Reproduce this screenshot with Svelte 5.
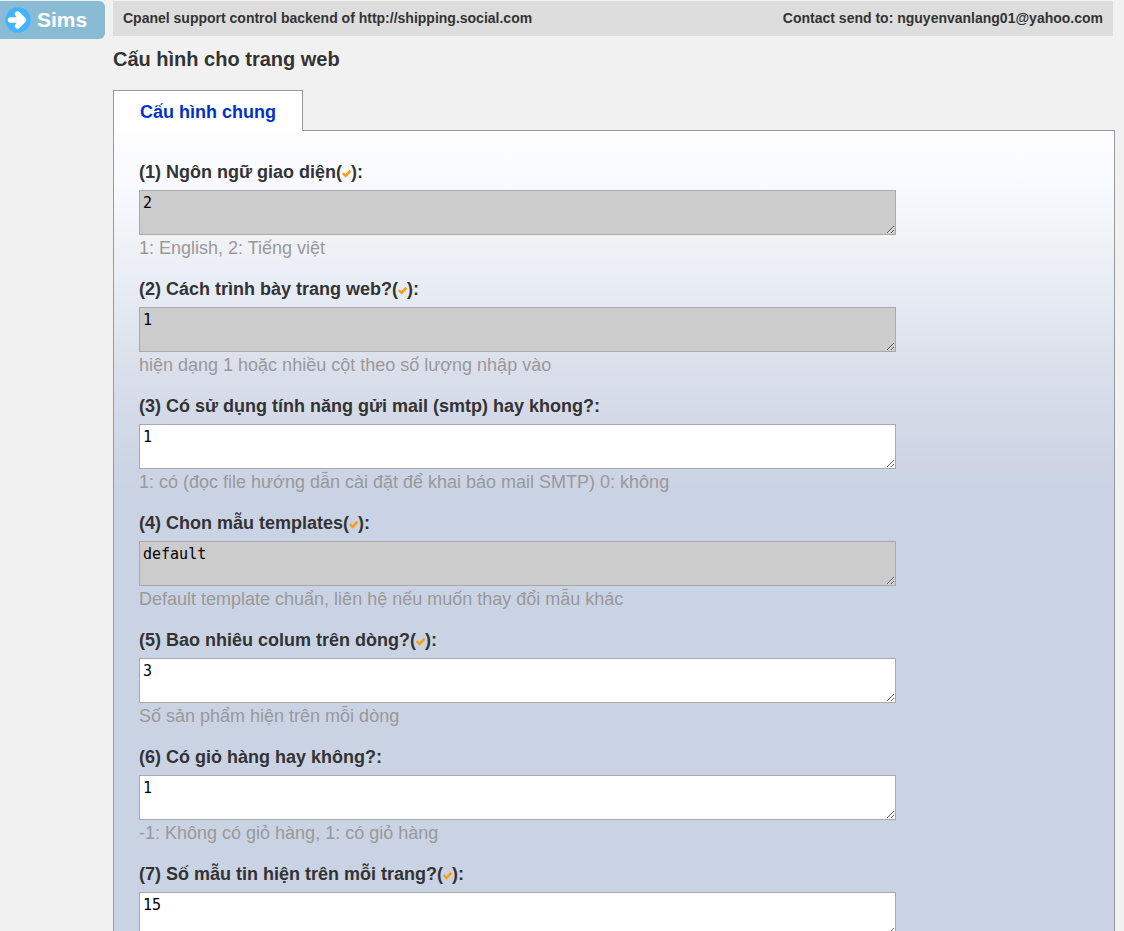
<script>
  const fields = [
    { label: 'Ngôn ngữ giao diện', marked: true, value: '2', locked: true, hint: '1: English, 2: Tiếng việt' },
    { label: 'Cách trình bày trang web?', marked: true, value: '1', locked: true, hint: 'hiện dạng 1 hoặc nhiều cột theo số lượng nhập vào' },
    { label: 'Có sử dụng tính năng gửi mail (smtp) hay khong?', marked: false, value: '1', locked: false, hint: '1: có (đọc file hướng dẫn cài đặt để khai báo mail SMTP) 0: không' },
    { label: 'Chon mẫu templates', marked: true, value: 'default', locked: true, hint: 'Default template chuẩn, liên hệ nếu muốn thay đổi mẫu khác' },
    { label: 'Bao nhiêu colum trên dòng?', marked: true, value: '3', locked: false, hint: 'Số sản phẩm hiện trên mỗi dòng' },
    { label: 'Có giỏ hàng hay không?', marked: false, value: '1', locked: false, hint: '-1: Không có giỏ hàng, 1: có giỏ hàng' },
    { label: 'Số mẫu tin hiện trên mỗi trang?', marked: true, value: '15', locked: false, hint: '' }
  ];
</script>

<div class="page">
  <aside>
    <a class="brand" href="#home">
      <svg width="26" height="26" viewBox="0 0 26 26" aria-hidden="true">
        <circle cx="13" cy="13" r="12.7" fill="#42b4fc" />
        <path d="M5.5 13H18M12.5 7L18.5 13L12.5 19" fill="none" stroke="#fff" stroke-width="5.4" stroke-linejoin="round" stroke-linecap="round" />
      </svg>
      <span>Sims</span>
    </a>
  </aside>

  <main>
    <header>
      <span>Cpanel support control backend of http://shipping.social.com</span>
      <span>Contact send to: nguyenvanlang01@yahoo.com</span>
    </header>

    <h1>Cấu hình cho trang web</h1>

    <nav><a class="tab" href="#general">Cấu hình chung</a></nav>

    <form class="panel">
      {#each fields as field, i}
        <div class="field">
          <label for="field-{i}">({i + 1}) {field.label}{#if field.marked}(<svg width="9" height="9" viewBox="0 0 10 9" aria-hidden="true"><path d="M0.8 4L4 7.2L9.4 1.4" fill="none" stroke="#ff9c12" stroke-width="2.8" /></svg>){/if}:</label>
          <textarea id="field-{i}" rows="2" readonly={field.locked} spellcheck="false" value={field.value}></textarea>
          {#if field.hint}<p>{field.hint}</p>{/if}
        </div>
      {/each}
    </form>
  </main>
</div>

<style>
  :global(body) {
    background: #f1f1f1;
    color: #333;
    font-family: "Liberation Sans", Arial, sans-serif;
  }

  .page {
    display: grid;
    grid-template-columns: 113px minmax(0, 1fr);
    height: 100vh;
    overflow: hidden;
    padding-top: 1px;
    padding-right: 9px;
    box-sizing: border-box;
  }

  .brand {
    display: flex;
    align-items: center;
    gap: 6px;
    height: 38px;
    margin-right: 8px;
    padding: 0 0 1px 5px;
    box-sizing: border-box;
    border-radius: 0 6px 6px 0;
    background: #89bbd4;
    color: #fff;
    font-size: 21px;
    font-weight: bold;
    text-decoration: none;
  }

  header {
    display: flex;
    justify-content: space-between;
    margin-right: 2px;
    padding: 0 10px;
    background: #ddd;
    font-size: 14px;
    font-weight: bold;
    line-height: 35px;
  }

  h1 {
    margin: 11px 0 19px;
    font-size: 20px;
    line-height: 24px;
  }

  nav {
    display: flex;
  }

  .tab {
    position: relative;
    z-index: 1;
    margin-bottom: -1px;
    padding: 2px 26px 0;
    border: 1px solid #999;
    border-bottom: 0;
    background: #fff;
    color: #0231ca;
    font-size: 18px;
    font-weight: bold;
    line-height: 38px;
    text-decoration: none;
  }

  .panel {
    padding: 30px 29px 0 25px;
    border: 1px solid #999;
    background: #cad3e4 linear-gradient(#fdfdff 0, #f9faff 50px, #eff1f5 115px, #eaeef6 140px, #dce1ec 225px, #d1d8e6 300px, #cad3e4 360px) no-repeat;
    font-size: 18px;
  }

  .field {
    margin-bottom: 16px;
  }

  label {
    display: block;
    margin-bottom: 7px;
    font-weight: bold;
    line-height: 22px;
  }

  textarea {
    display: block;
    width: 80%;
    height: 45px;
    box-sizing: border-box;
    padding: 2px 3px;
    border: 1px solid #a9a9a9;
    background: #fff;
    color: #000;
    font: 15px/20px "DejaVu Sans Mono", monospace;
    outline: none;
  }

  textarea:read-only {
    background: #ccc;
  }

  p {
    margin: 0;
    color: #999;
    line-height: 27px;
  }
</style>
